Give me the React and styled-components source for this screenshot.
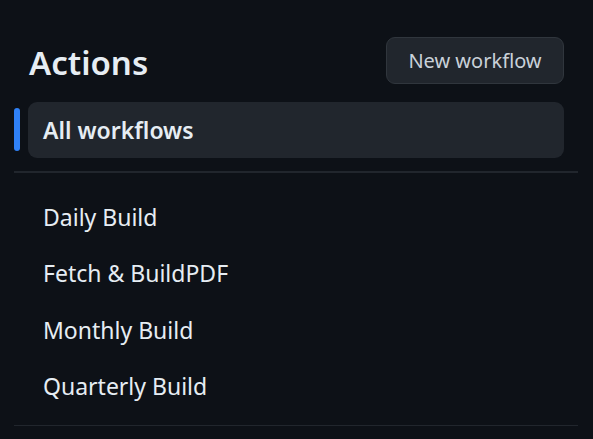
import React from 'react';
import styled, { createGlobalStyle } from 'styled-components';

const workflows = ['Daily Build', 'Fetch & BuildPDF', 'Monthly Build', 'Quarterly Build'];

const App = () => {
  return (
    <>
      <GlobalStyle />
      <Sidebar>
        <Header>
          <Title>Actions</Title>
          <Button>New workflow</Button>
        </Header>
        <NavList>
          <NavItem $active>All workflows</NavItem>
        </NavList>
        <Divider />
        <NavList $padded>
          {workflows.map((name) => (
            <NavItem key={name}>{name}</NavItem>
          ))}
        </NavList>
        <Divider />
      </Sidebar>
    </>
  );
};

export default App;

const GlobalStyle = createGlobalStyle`
  body {
    margin: 0;
    background: #0d1117;
    font-family: "Noto Sans", "Liberation Sans", sans-serif;
    color: #e6edf3;
  }
`;

const Sidebar = styled.div`
  width: 564px;
  margin-left: 14px;
  padding-top: 37px;
`;

const Header = styled.div`
  display: flex;
  align-items: center;
  justify-content: space-between;
  padding: 0 14px 0 15px;
  height: 47px;
  margin-bottom: 18px;
`;

export const Title = styled.h2`
  margin: 0;
  font-size: 33px;
  font-weight: 600;
  color: #e6edf3;
  position: relative;
  top: 2px;
`;

export const Button = styled.button`
  height: 47px;
  width: 178px;
  background: #21262d;
  color: #c9d1d9;
  border: 1.5px solid #30363d;
  border-radius: 9px;
  font-family: inherit;
  font-size: 20px;
  cursor: pointer;
`;

const NavList = styled.ul`
  list-style: none;
  margin: 0;
  padding: ${(p) => (p.$padded ? '16px 0 10px' : '0 0 13px')};
`;

const NavItem = styled.li`
  position: relative;
  height: 56.5px;
  margin: 0 14px;
  padding: 0 15px;
  display: flex;
  align-items: center;
  border-radius: 9px;
  font-size: 23px;
  font-weight: ${(p) => (p.$active ? 600 : 400)};
  background: ${(p) => (p.$active ? '#21262d' : 'transparent')};
  color: #e6edf3;

  ${(p) => p.$active && 'height: 56px;'}

  &::before {
    content: '';
    display: ${(p) => (p.$active ? 'block' : 'none')};
    position: absolute;
    left: -14px;
    top: 6px;
    width: 6px;
    height: 43px;
    border-radius: 6px;
    background: #2f81f7;
  }
`;

const Divider = styled.div`
  height: 1.5px;
  background: #21262d;
`;
